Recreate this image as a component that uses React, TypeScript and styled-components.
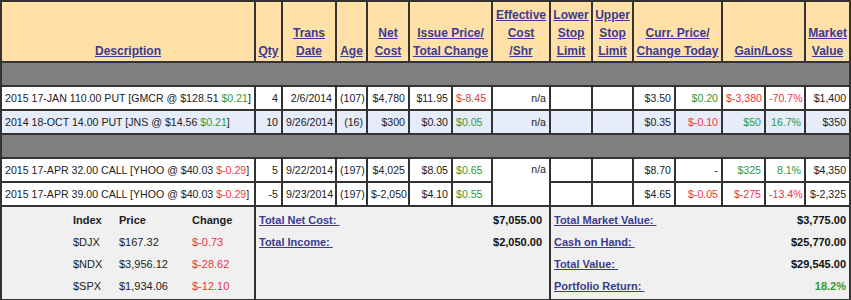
import styled, { createGlobalStyle } from 'styled-components';

const GREEN = '#339933';
const RED = '#ee3344';

type Tone = 'plain' | 'up' | 'down';

const toneColor = (tone?: Tone) =>
  tone === 'up' ? GREEN : tone === 'down' ? RED : '#222';

const GlobalStyle = createGlobalStyle`
  body {
    margin: 0;
    background: #ffffff;
    font-family: "Liberation Sans", Arial, sans-serif;
  }
`;

const COLS = [254, 27, 54, 31, 42, 43, 40, 58, 42, 41, 42, 47, 43, 40, 45];

const Table = styled.table`
  border-collapse: collapse;
  table-layout: fixed;
  width: 850px;
  font-family: "Liberation Sans", Arial, sans-serif;
  border: 2px solid #333;
`;

const HeadRow = styled.tr`
  height: 61px;
  background: #ffe0a6;
`;

const HeadCell = styled.th`
  border: 2px solid #333;
  padding: 0 1px 1px;
  vertical-align: bottom;
  text-align: center;
  font-size: 12px;
  line-height: 18px;
  font-weight: bold;
  white-space: nowrap;
`;

const HeadLink = styled.a`
  color: #3b3b94;
  text-decoration: underline;
  cursor: pointer;
`;

const SpacerRow = styled.tr`
  height: 24px;
  background: #808080;

  td {
    border: 2px solid #333;
    padding: 0;
  }
`;

const Row = styled.tr<{ $shade?: boolean }>`
  height: 24px;
  background: ${p => (p.$shade ? '#e6ecfa' : '#ffffff')};
`;

const Cell = styled.td<{ $align?: 'left' | 'right'; $tone?: Tone; $top?: boolean }>`
  border: 2px solid #333;
  padding: 0 3px;
  font-size: 10.6px;
  line-height: 20px;
  white-space: nowrap;
  overflow: hidden;
  text-align: ${p => p.$align ?? 'right'};
  vertical-align: ${p => (p.$top ? 'top' : 'middle')};
  color: ${p => toneColor(p.$tone)};
`;

const Quote = styled.span<{ $tone: Tone }>`
  color: ${p => toneColor(p.$tone)};
`;

const SummaryRow = styled.tr`
  height: 94px;
  background: #f0f0f0;
`;

const SummaryCell = styled.td`
  border: 2px solid #333;
  padding: 2px 3px 0;
  vertical-align: top;
  font-size: 11px;
  line-height: 22px;
`;

const IndexGrid = styled.div`
  display: grid;
  grid-template-columns: 46px 73px auto;
  padding-left: 68px;
  color: #222;
`;

const IndexHead = styled.div`
  font-weight: bold;
`;

const IndexValue = styled.div<{ $tone?: Tone }>`
  color: ${p => toneColor(p.$tone)};
`;

const TotalsList = styled.div<{ $gutter: number }>`
  display: flex;
  flex-direction: column;
  padding-right: ${p => p.$gutter}px;
`;

const TotalLine = styled.div`
  display: flex;
  justify-content: space-between;
  font-weight: bold;
`;

const TotalLabel = styled.a`
  color: #3b3b94;
  text-decoration: underline;
  cursor: pointer;
  white-space: pre;
`;

const TotalValue = styled.span<{ $tone?: Tone }>`
  color: ${p => (p.$tone === 'up' ? GREEN : '#111')};
`;

type Position = {
  desc: string;
  stock: string;
  stockTone: Tone;
  qty: string;
  date: string;
  age: string;
  net: string;
  issue: string;
  totalChg: [string, Tone];
  curr: string;
  today: [string, Tone];
  gain: [string, Tone];
  pct: [string, Tone];
  market: string;
};

const rows: Position[] = [
  {
    desc: '2015 17-JAN 110.00 PUT [GMCR @ $128.51 ',
    stock: '$0.21',
    stockTone: 'up',
    qty: '4',
    date: '2/6/2014',
    age: '(107)',
    net: '$4,780',
    issue: '$11.95',
    totalChg: ['$-8.45', 'down'],
    curr: '$3.50',
    today: ['$0.20', 'up'],
    gain: ['$-3,380', 'down'],
    pct: ['-70.7%', 'down'],
    market: '$1,400',
  },
  {
    desc: '2014 18-OCT 14.00 PUT [JNS @ $14.56 ',
    stock: '$0.21',
    stockTone: 'up',
    qty: '10',
    date: '9/26/2014',
    age: '(16)',
    net: '$300',
    issue: '$0.30',
    totalChg: ['$0.05', 'up'],
    curr: '$0.35',
    today: ['$-0.10', 'down'],
    gain: ['$50', 'up'],
    pct: ['16.7%', 'up'],
    market: '$350',
  },
  {
    desc: '2015 17-APR 32.00 CALL [YHOO @ $40.03 ',
    stock: '$-0.29',
    stockTone: 'down',
    qty: '5',
    date: '9/22/2014',
    age: '(197)',
    net: '$4,025',
    issue: '$8.05',
    totalChg: ['$0.65', 'up'],
    curr: '$8.70',
    today: ['-', 'plain'],
    gain: ['$325', 'up'],
    pct: ['8.1%', 'up'],
    market: '$4,350',
  },
  {
    desc: '2015 17-APR 39.00 CALL [YHOO @ $40.03 ',
    stock: '$-0.29',
    stockTone: 'down',
    qty: '-5',
    date: '9/23/2014',
    age: '(197)',
    net: '$-2,050',
    issue: '$4.10',
    totalChg: ['$0.55', 'up'],
    curr: '$4.65',
    today: ['$-0.05', 'down'],
    gain: ['$-275', 'down'],
    pct: ['-13.4%', 'down'],
    market: '$-2,325',
  },
];

const indexes: [string, string, string][] = [
  ['$DJX', '$167.32', '$-0.73'],
  ['$NDX', '$3,956.12', '$-28.62'],
  ['$SPX', '$1,934.06', '$-12.10'],
];

// effective: 'show' draws the n/a cell, 'span' draws it over two rows, 'skip' leaves it out
const PositionRow = ({
  p,
  shade,
  effective,
}: {
  p: Position;
  shade?: boolean;
  effective: 'show' | 'span' | 'skip';
}) => (
  <Row $shade={shade}>
    <Cell $align='left'>
      {p.desc}
      <Quote $tone={p.stockTone}>{p.stock}</Quote>]
    </Cell>
    <Cell>{p.qty}</Cell>
    <Cell>{p.date}</Cell>
    <Cell>{p.age}</Cell>
    <Cell>{p.net}</Cell>
    <Cell>{p.issue}</Cell>
    <Cell $align='left' $tone={p.totalChg[1]}>{p.totalChg[0]}</Cell>
    {effective === 'show' && <Cell>n/a</Cell>}
    {effective === 'span' && (
      <Cell rowSpan={2} $top>
        n/a
      </Cell>
    )}
    <Cell />
    <Cell />
    <Cell>{p.curr}</Cell>
    <Cell $tone={p.today[1]}>{p.today[0]}</Cell>
    <Cell $tone={p.gain[1]}>{p.gain[0]}</Cell>
    <Cell $tone={p.pct[1]}>{p.pct[0]}</Cell>
    <Cell>{p.market}</Cell>
  </Row>
);

const heads: { label: string[]; span?: number }[] = [
  { label: ['Description'] },
  { label: ['Qty'] },
  { label: ['Trans', 'Date'] },
  { label: ['Age'] },
  { label: ['Net', 'Cost'] },
  { label: ['Issue Price/', 'Total Change'], span: 2 },
  { label: ['Effective', 'Cost', '/Shr'] },
  { label: ['Lower', 'Stop', 'Limit'] },
  { label: ['Upper', 'Stop', 'Limit'] },
  { label: ['Curr. Price/', 'Change Today'], span: 2 },
  { label: ['Gain/Loss'], span: 2 },
  { label: ['Market', 'Value'] },
];

export default function App() {
  return (
    <>
      <GlobalStyle />
      <Table>
        <colgroup>
          {COLS.map((w, i) => (
            <col key={i} style={{ width: w }} />
          ))}
        </colgroup>
        <thead>
          <HeadRow>
            {heads.map(h => (
              <HeadCell key={h.label.join()} colSpan={h.span}>
                <HeadLink>
                  {h.label.map((l, i) => (
                    <span key={l}>
                      {i > 0 && <br />}
                      {l}
                    </span>
                  ))}
                </HeadLink>
              </HeadCell>
            ))}
          </HeadRow>
        </thead>
        <tbody>
          <SpacerRow>
            <td colSpan={15} />
          </SpacerRow>
          <PositionRow p={rows[0]} effective='show' />
          <PositionRow p={rows[1]} shade effective='show' />
          <SpacerRow>
            <td colSpan={15} />
          </SpacerRow>
          <PositionRow p={rows[2]} effective='span' />
          <PositionRow p={rows[3]} effective='skip' />
          <SummaryRow>
            <SummaryCell>
              <IndexGrid>
                <IndexHead>Index</IndexHead>
                <IndexHead>Price</IndexHead>
                <IndexHead>Change</IndexHead>
                {indexes.map(([name, price, chg]) => (
                  <>
                    <IndexValue key={name}>{name}</IndexValue>
                    <IndexValue>{price}</IndexValue>
                    <IndexValue $tone='down'>{chg}</IndexValue>
                  </>
                ))}
              </IndexGrid>
            </SummaryCell>
            <SummaryCell colSpan={7}>
              <TotalsList $gutter={4}>
                <TotalLine>
                  <TotalLabel>{'Total Net Cost: '}</TotalLabel>
                  <TotalValue>$7,055.00</TotalValue>
                </TotalLine>
                <TotalLine>
                  <TotalLabel>{'Total Income: '}</TotalLabel>
                  <TotalValue>$2,050.00</TotalValue>
                </TotalLine>
              </TotalsList>
            </SummaryCell>
            <SummaryCell colSpan={7}>
              <TotalsList $gutter={0}>
                <TotalLine>
                  <TotalLabel>{'Total Market Value: '}</TotalLabel>
                  <TotalValue>$3,775.00</TotalValue>
                </TotalLine>
                <TotalLine>
                  <TotalLabel>{'Cash on Hand: '}</TotalLabel>
                  <TotalValue>$25,770.00</TotalValue>
                </TotalLine>
                <TotalLine>
                  <TotalLabel>{'Total Value: '}</TotalLabel>
                  <TotalValue>$29,545.00</TotalValue>
                </TotalLine>
                <TotalLine>
                  <TotalLabel>{'Portfolio Return: '}</TotalLabel>
                  <TotalValue $tone='up'>18.2%</TotalValue>
                </TotalLine>
              </TotalsList>
            </SummaryCell>
          </SummaryRow>
        </tbody>
      </Table>
    </>
  );
}
